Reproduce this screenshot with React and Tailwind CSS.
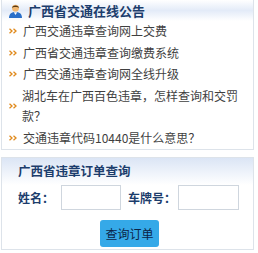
import React from 'react';

const news = [
  '广西交通违章查询网上交费',
  '广西省交通违章查询缴费系统',
  '广西交通违章查询网全线升级',
  '湖北车在广西百色违章，怎样查询和交罚款？',
  '交通违章代码10440是什么意思？',
];

function Arrows() {
  return (
    <svg width="8" height="6" viewBox="0 0 8 6" className="shrink-0">
      <path d="M0.5 0.8 L3 3 L0.5 5.2" fill="none" stroke="#e08a1c" strokeWidth="1.3" />
      <path d="M4.5 0.8 L7 3 L4.5 5.2" fill="none" stroke="#e08a1c" strokeWidth="1.3" />
    </svg>
  );
}

function UserIcon() {
  return (
    <svg width="15" height="15" viewBox="0 0 15 15">
      <path d="M1 15 C1 10.5 4 9 7.5 9 C11 9 14 10.5 14 15 Z" fill="#2a6fc9" />
      <path d="M5.8 9.2 L7.5 12 L9.2 9.2 Z" fill="#fff" />
      <circle cx="7.5" cy="5.2" r="3.4" fill="#f2b872" />
      <path d="M3.9 5 C3.9 1.6 11.1 1.6 11.1 5 C10 3.6 5 3.6 3.9 5 Z" fill="#5a3a12" />
    </svg>
  );
}

export default function App() {
  return (
    <div className="w-[258px] h-[253px] bg-white overflow-hidden pl-[1px] pt-0 font-['Noto_Sans_CJK_SC',sans-serif]">
      {/* 公告 */}
      <div className="w-[253px] h-[150px] border border-t-0 border-[#dde3ea]">
        <div className="h-[21px] flex items-center gap-[5px] pl-[6px] bg-gradient-to-b from-white via-[#e3ebf8] to-white">
          <UserIcon />
          <h2 className="text-[13px] font-bold text-[#1c3d6c] leading-none">广西省交通在线公告</h2>
        </div>
        <ul className="pl-[7px] pr-[10px] flex flex-col gap-[1px]">
          {news.map((t) => (
            <li key={t} className="flex items-center">
              <span className="w-[14px] flex"><Arrows /></span>
              <span className="text-[12px] leading-[20.5px] text-[#3f3f3f]">{t}</span>
            </li>
          ))}
        </ul>
      </div>

      {/* 订单查询 */}
      <div className="mt-[7px] w-[253px] h-[93px] border border-[#dde3ea]">
        <div className="h-[27px] flex items-center pl-[16px] bg-gradient-to-b from-[#dbe5f5] to-white">
          <h2 className="text-[12.5px] font-bold text-[#1c3d6c] leading-none">广西省违章订单查询</h2>
        </div>
        <div className="flex items-center pl-[16px] text-[12px] font-bold text-[#1c3d6c]">
          <span className="w-[43px]">姓名：</span>
          <input className="w-[60px] h-[25px] border border-[#cfd6de] bg-white outline-none" />
          <span className="ml-[7px] w-[50px]">车牌号：</span>
          <input className="w-[61px] h-[25px] border border-[#cfd6de] bg-white outline-none" />
        </div>
        <div className="flex pl-[98px] mt-[10px]">
          <button className="w-[59px] h-[27px] rounded-[3px] bg-[#35a9e8] flex items-center justify-center">
            <span className="text-[12px] text-[#0b2447]">查询订单</span>
          </button>
        </div>
      </div>
    </div>
  );
}
